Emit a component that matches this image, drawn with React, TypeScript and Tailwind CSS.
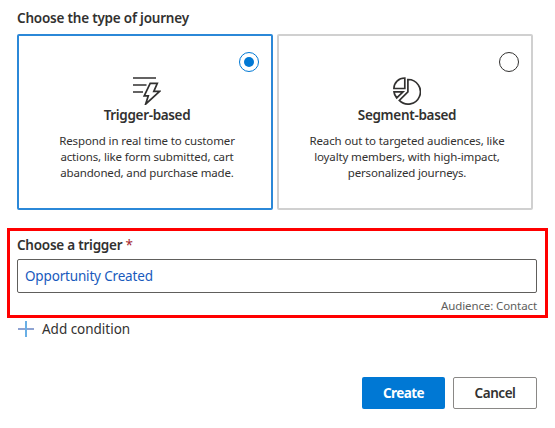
import React from "react";

function Radio({ checked }: { checked: boolean }) {
  return (
    <span
      className={
        "flex size-5 items-center justify-center rounded-full border " +
        (checked ? "border-[#0078d4]" : "border-[#323130]")
      }
    >
      {checked && <span className="size-2.5 rounded-full bg-[#0078d4]" />}
    </span>
  );
}

function TriggerIcon() {
  return (
    <svg width="28" height="28" viewBox="0 0 28 28" fill="none" stroke="#323130" strokeWidth="1.7">
      <path d="M0 1H23M0 8H13.5M0 15H10" />
      <path d="M17.2 6.3H24.3L20.8 14.3H26.6L12.6 27.2L15.3 18.8H11.2Z" />
    </svg>
  );
}

function SegmentIcon() {
  return (
    <svg width="28" height="28" viewBox="0 0 28 28" fill="none" stroke="#323130" strokeWidth="1.7">
      <path d="M11.8 1V11.5H0.9C0.9 5.6 5.6 1 11.8 1Z" />
      <path d="M14.9 2.5A12.3 12.3 0 1 1 6.3 23.4L14.9 14.8Z" />
      <path d="M1 14.9H10L3.7 20.9C2 18.8 1.1 17 1 14.9Z" />
    </svg>
  );
}

interface CardProps {
  title: string;
  titleClass: string;
  lines: { text: string; className: string }[];
  selected?: boolean;
  icon: React.ReactNode;
}

function JourneyCard({ title, titleClass, lines, selected = false, icon }: CardProps) {
  return (
    <div
      className={
        "flex h-44 w-64 flex-col items-center rounded-[2px] border-2 pt-4 pl-1 " +
        (selected ? "border-[#2b88d8]" : "border-[#d0d0d0]")
      }
    >
      <div className="flex h-5 w-full justify-end pr-3">
        <Radio checked={selected} />
      </div>
      <div className="mt-[5px] h-7">{icon}</div>
      <h3 className={"h-5 text-[13.5px] leading-5 font-semibold " + titleClass}>{title}</h3>
      <div className="mt-[8px] text-center text-[11.5px] leading-4">
        {lines.map((line) => (
          <p key={line.text} className={line.className}>{line.text}</p>
        ))}
      </div>
    </div>
  );
}

export default function App() {
  return (
    <main className="h-[428px] w-[555px] overflow-hidden bg-white pt-2 font-['Noto_Sans','Open_Sans',sans-serif] whitespace-nowrap text-[#323130]">
      <h2 className="ml-[17px] h-[26px] text-[13.5px] leading-5 font-semibold tracking-[-0.21px]">Choose the type of journey</h2>
      <div className="ml-[17px] flex gap-1">
        <JourneyCard
          selected
          title="Trigger-based"
          titleClass="tracking-[-0.34px]"
          icon={<TriggerIcon />}
          lines={[
            { text: "Respond in real time to customer", className: "tracking-[-0.12px]" },
            { text: "actions, like form submitted, cart", className: "tracking-[-0.14px]" },
            { text: "abandoned, and purchase made.", className: "tracking-[-0.16px]" },
          ]}
        />
        <JourneyCard
          title="Segment-based"
          titleClass="tracking-[-0.3px]"
          icon={<SegmentIcon />}
          lines={[
            { text: "Reach out to targeted audiences, like", className: "tracking-[-0.13px]" },
            { text: "loyalty members, with high-impact,", className: "tracking-[-0.13px]" },
            { text: "personalized journeys.", className: "tracking-[-0.15px]" },
          ]}
        />
      </div>
      <section className="mt-[18px] ml-[7px] h-[90px] w-[541px] border-3 border-[#ff0000] pt-1 pl-[7px]">
        <label className="block h-6 text-[13.5px] leading-5 font-semibold tracking-[-0.24px]">
          Choose a trigger <span className="font-normal text-[#a4262c]">*</span>
        </label>
        <div className="flex h-[34px] w-[520px] items-center rounded-[2px] border border-[#605e5c] pl-[7px] text-[13.5px] tracking-[-0.17px] text-[#185abd]">
          Opportunity Created
        </div>
        <p className="mt-[5px] w-[520px] text-right text-[11.5px] leading-4 tracking-[-0.1px] text-[#605e5c]">Audience: Contact</p>
      </section>
      <button className="mt-px ml-[18px] flex h-5 items-center gap-2 text-[13.5px] leading-5 tracking-[-0.02px]">
        <svg width="16" height="16" viewBox="0 0 16 16" fill="none">
          <path d="M0 8H16" stroke="#8ea3d2" strokeWidth="2" />
          <path d="M8 0V16" stroke="#69afe5" strokeWidth="2" />
        </svg>
        Add condition
      </button>
      <div className="mt-[38px] mr-[18px] flex justify-end gap-2 text-[13.5px] font-semibold">
        <button className="h-8 w-[83px] rounded-[2px] bg-[#0078d4] font-bold tracking-[-0.6px] text-white">Create</button>
        <button className="h-8 w-[84px] rounded-[2px] border border-[#8a8886] tracking-[-0.45px]">Cancel</button>
      </div>
    </main>
  );
}
